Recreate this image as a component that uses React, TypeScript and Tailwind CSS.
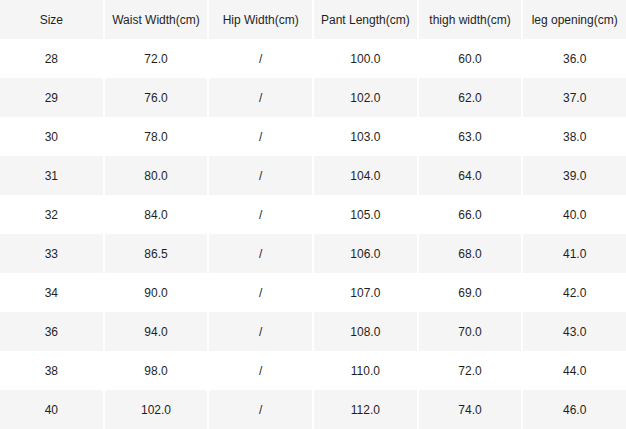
import React from "react";

const header = ["Size", "Waist Width(cm)", "Hip Width(cm)", "Pant Length(cm)", "thigh width(cm)", "leg opening(cm)"];
const rows = [
  ["28", "72.0", "/", "100.0", "60.0", "36.0"],
  ["29", "76.0", "/", "102.0", "62.0", "37.0"],
  ["30", "78.0", "/", "103.0", "63.0", "38.0"],
  ["31", "80.0", "/", "104.0", "64.0", "39.0"],
  ["32", "84.0", "/", "105.0", "66.0", "40.0"],
  ["33", "86.5", "/", "106.0", "68.0", "41.0"],
  ["34", "90.0", "/", "107.0", "69.0", "42.0"],
  ["36", "94.0", "/", "108.0", "70.0", "43.0"],
  ["38", "98.0", "/", "110.0", "72.0", "44.0"],
  ["40", "102.0", "/", "112.0", "74.0", "46.0"],
];

function Row({ cells, gray }: { cells: string[]; gray: boolean }) {
  return (
    <div className="grid grid-cols-6 gap-x-[2px] h-[39px]">
      {cells.map((c, i) => (
        <div
          key={i}
          className={`flex items-center justify-center text-[12px] text-[#1f1f1f] ${gray ? "bg-[#f5f5f5]" : "bg-white"}`}
        >
          {c}
        </div>
      ))}
    </div>
  );
}

export default function App() {
  return (
    <div className="w-[626px] h-[429px] bg-white overflow-hidden flex flex-col" style={{ fontFamily: '"Liberation Sans", Arial, sans-serif' }}>
      <Row cells={header} gray={true} />
      {rows.map((r, i) => (
        <Row key={i} cells={r} gray={i % 2 === 1} />
      ))}
    </div>
  );
}
